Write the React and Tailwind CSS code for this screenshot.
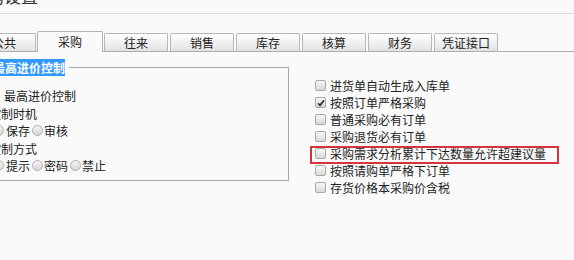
import React from "react";

const FONT = { fontFamily: '"Noto Sans CJK SC", "Noto Sans", sans-serif' };

function Box({ checked }) {
  return (
    <span className="relative inline-block w-[11px] h-[11px] shrink-0 rounded-[2px] border border-[#a8a8a8] bg-gradient-to-b from-[#f7f7f7] to-[#d9d9d9]">
      {checked && (
        <svg className="absolute left-[0px] top-[0px]" width="10" height="10" viewBox="0 0 10 10">
          <path d="M2 5.2 L4 7.4 L8 2.4" fill="none" stroke="#333" strokeWidth="1.7" />
        </svg>
      )}
    </span>
  );
}

function Radio() {
  return (
    <span className="inline-block w-[11px] h-[11px] shrink-0 rounded-full border border-[#b0b0b0] bg-gradient-to-b from-[#f5f5f5] to-[#d6d6d6]" />
  );
}

function Tab({ label, active }) {
  if (active) {
    return (
      <div className="relative z-10 -mb-px w-[66px] h-[21px] -mx-px flex items-center justify-center rounded-t-[2px] border border-b-0 border-[#b3b3b3] bg-[#fafafa] text-[12px] leading-none text-[#222]">
        {label}
      </div>
    );
  }
  return (
    <div className="w-[64px] h-[18px] flex items-center justify-center rounded-t-[2px] border border-b-0 border-[#b8b8b8] bg-gradient-to-b from-[#ffffff] to-[#e2e2e2] text-[12px] leading-none text-[#222]">
      {label}
    </div>
  );
}

export default function App() {
  const right = [
    ["进货单自动生成入库单", false],
    ["按照订单严格采购", true],
    ["普通采购必有订单", false],
    ["采购退货必有订单", false],
    ["采购需求分析累计下达数量允许超建议量", false, true],
    ["按照请购单严格下订单", false],
    ["存货价格本采购价含税", false],
  ];
  return (
    <div className="w-[574px] h-[260px] overflow-hidden bg-[#fafafa] text-[#222]" style={FONT}>
      <div className="h-[14px] border-b border-[#dcdcdc] overflow-hidden">
        <div className="ml-[-30px] mt-[-13px] text-[17px] leading-[17px] text-[#333]">采购设置</div>
      </div>
      <div className="mt-[17px] ml-[-28px] w-[620px] h-[21px] flex items-end gap-[2px] border-b border-[#aeaeae]">
        <Tab label="公共" />
        <Tab label="采购" active />
        <Tab label="往来" />
        <Tab label="销售" />
        <Tab label="库存" />
        <Tab label="核算" />
        <Tab label="财务" />
        <Tab label="凭证接口" />
      </div>
      <div className="flex">
        <fieldset className="ml-[-22px] mt-[9px] w-[311px] h-[120px] border border-[#a6a6a6] pl-[10px]">
          <legend className="ml-[4px] pr-[4px] text-[12px] leading-[13px]">
            <span className="bg-[#3399ff] text-white font-bold">最高进价控制</span>
          </legend>
          <div className="mt-[13px] flex flex-col text-[12px] leading-[17.5px]">
            <div className="flex items-center h-[17.5px]">
              <Box />
              <span className="ml-[4px]">最高进价控制</span>
            </div>
            <div className="h-[17.5px]">控制时机</div>
            <div className="flex items-center h-[17.5px]">
              <span className="ml-[4px]"><Radio /></span>
              <span className="ml-[2px]">保存</span>
              <span className="ml-[2px] flex"><Radio /></span>
              <span className="ml-[1px]">审核</span>
            </div>
            <div className="h-[17.5px]">控制方式</div>
            <div className="flex items-center h-[17.5px]">
              <span className="ml-[4px] flex"><Radio /></span>
              <span className="ml-[2px]">提示</span>
              <span className="ml-[2px] flex"><Radio /></span>
              <span className="ml-[1px]">密码</span>
              <span className="ml-[2px] flex"><Radio /></span>
              <span className="ml-[1px]">禁止</span>
            </div>
          </div>
        </fieldset>
        <div className="ml-[26px] mt-[25px] flex flex-col">
          {right.map(([t, c, hl]) => (
            <div key={t} className="relative flex items-center h-[17px] text-[12px] leading-none">
              <Box checked={c} />
              <span className="ml-[4px] whitespace-nowrap">{t}</span>
              {hl && (
                <span className="absolute left-[-5px] top-[1px] w-[249px] h-[18px] border-2 border-[#d7333b]" />
              )}
            </div>
          ))}
        </div>
      </div>
    </div>
  );
}
